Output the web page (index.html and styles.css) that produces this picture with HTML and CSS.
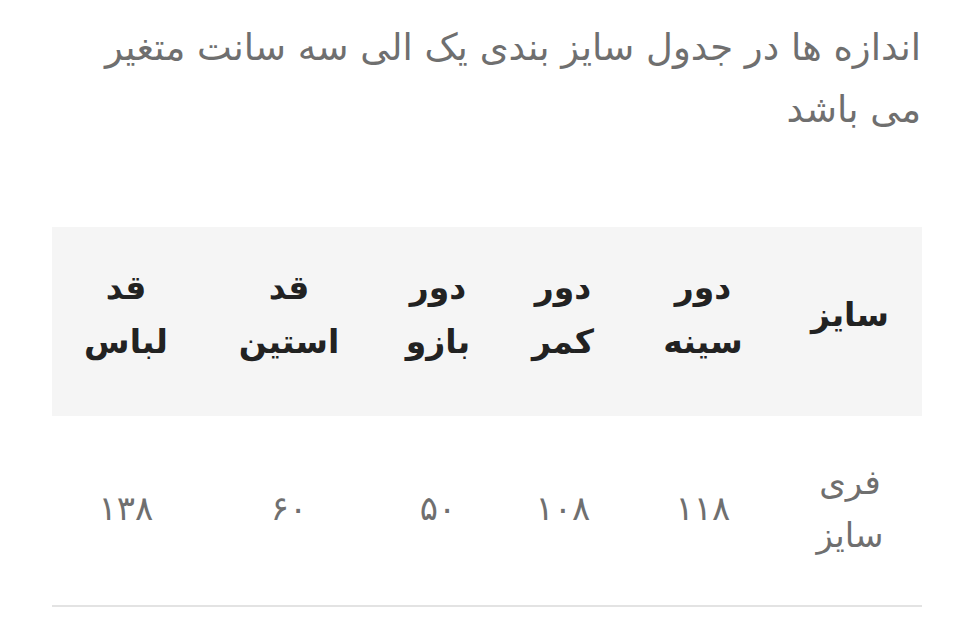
FILE: index.html
```html
<!DOCTYPE html>
<html lang="fa" dir="rtl">
<head>
<meta charset="utf-8">
<link rel="stylesheet" href="styles.css">
</head>
<body>
<div class="page">
  <p class="note">اندازه ها در جدول سایز بندی یک الی سه سانت متغیر می باشد</p>
  <table class="sizes">
    <thead>
      <tr>
        <th class="c1">سایز</th>
        <th class="c2">دور<br>سینه</th>
        <th class="c3">دور<br>کمر</th>
        <th class="c4">دور<br>بازو</th>
        <th class="c5">قد<br>استین</th>
        <th class="c6">قد<br>لباس</th>
      </tr>
    </thead>
    <tbody>
      <tr>
        <td>فری<br>سایز</td>
        <td>۱۱۸</td>
        <td>۱۰۸</td>
        <td>۵۰</td>
        <td>۶۰</td>
        <td>۱۳۸</td>
      </tr>
    </tbody>
  </table>
</div>
</body>
</html>
```
FILE: styles.css
```css
html, body {
  margin: 0;
  padding: 0;
  background: #fff;
}
body {
  font-family: "DejaVu Sans", sans-serif;
}
.page {
  padding: 17px 57px 0 52px;
  box-sizing: border-box;
  width: 979px;
}
.note {
  margin: 0 0 86px 0;
  font-size: 37px;
  line-height: 62px;
  color: #6f6f6f;
  text-align: right;
  padding: 0 1px 0 30px;
}
.sizes {
  width: 870px;
  border-collapse: collapse;
  table-layout: fixed;
}
.sizes th {
  background: #f5f5f5;
  font-weight: bold;
  font-size: 33px;
  line-height: 54px;
  color: #222;
  height: 175px;
  padding: 0 0 14px 0;
  text-align: center;
  vertical-align: middle;
}
.sizes td {
  font-size: 34px;
  line-height: 53px;
  color: #6f6f6f;
  height: 185px;
  padding: 0 0 4px 0;
  text-align: center;
  vertical-align: middle;
  border-bottom: 2px solid #e3e3e3;
}
.c1 { width: 144px; }
.c2 { width: 150px; }
.c3 { width: 130px; }
.c4 { width: 120px; }
.c5 { width: 178px; }
.c6 { width: 148px; }
```
